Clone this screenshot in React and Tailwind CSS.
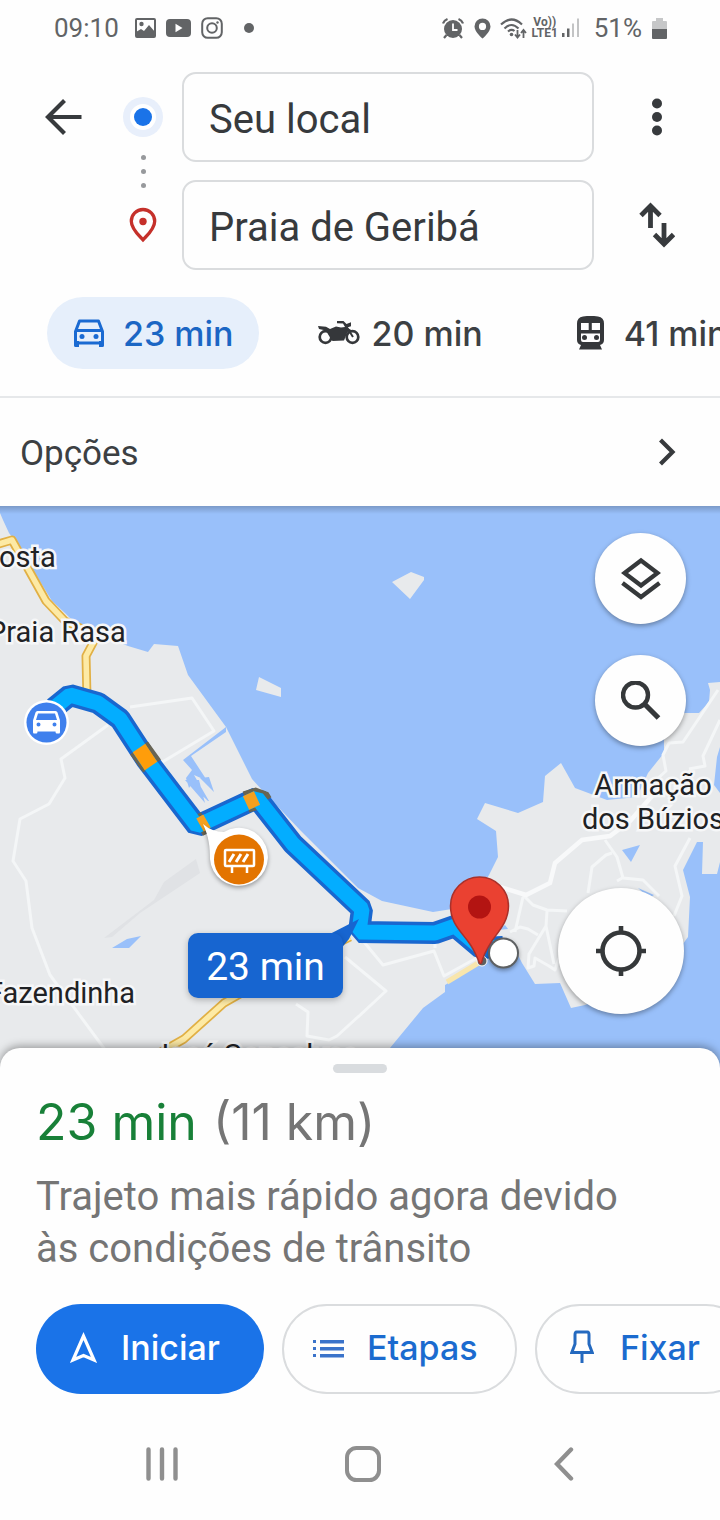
import React from "react";

function StatusBar() {
  return (
    <div className="flex h-14 items-center justify-between pl-[54px] pr-[53px] text-[26px] leading-8 text-[#626466]">
      <div className="flex items-center">
        <span>09:10</span>
        <svg className="ml-4 h-[20px] w-[21px]" viewBox="0 0 21 20" fill="none">
          <rect x="1" y="1" width="19" height="18" rx="1" stroke="currentColor" strokeWidth="2" />
          <path d="M1 14l5-3 3 2 5-6 6 7v5H1z" fill="currentColor" />
          <circle cx="6.500" cy="6" r="2.200" fill="currentColor" />
        </svg>
        <svg className="ml-[10px] h-[18px] w-[25px]" viewBox="0 0 25 18">
          <rect width="25" height="18" rx="4" fill="currentColor" />
          <path d="M9.500 4.800v8.400l7-4.200z" fill="#fefefe" />
        </svg>
        <svg className="ml-[10px] h-[22px] w-[22px]" viewBox="0 0 22 22" fill="none" stroke="currentColor" strokeWidth="2">
          <rect x="1.200" y="1.200" width="19.600" height="19.600" rx="5.500" />
          <circle cx="11" cy="11" r="4.800" />
          <circle cx="16.500" cy="5.500" r="1.200" fill="currentColor" stroke="none" />
        </svg>
        <span className="ml-[21px] size-[10px] rounded-full bg-current" />
      </div>
      <div className="flex items-center">
        <svg className="h-[21px] w-[22px]" viewBox="0 0 22 21" fill="none" stroke="currentColor">
          <circle cx="11" cy="11" r="9" fill="currentColor" stroke="none" />
          <path d="M1 5.500Q2 2.500 5.500 1M21 5.500Q20 2.500 16.500 1M4.500 17l-2.500 3M17.500 17l2.500 3" strokeWidth="2.200" />
          <path d="M11 5.500V12h4.500" stroke="#fefefe" strokeWidth="1.800" />
        </svg>
        <svg className="ml-[10px] h-[21px] w-[17px]" viewBox="0 0 17 21">
          <path fillRule="evenodd" fill="currentColor" d="M8.500 0.500A8 8 0 0 0 .5 8.500C.5 14 8.500 20.500 8.500 20.500S16.500 14 16.500 8.500A8 8 0 0 0 8.500.5zM8.500 4.800a3.600 3.600 0 1 1 0 7.200 3.600 3.600 0 0 1 0-7.200z" />
        </svg>
        <svg className="ml-[9px] h-[21px] w-[27px]" viewBox="0 0 27 21" fill="none" stroke="currentColor" strokeWidth="2.200">
          <path d="M1 6.500Q11.500-3.500 22 6.500M4.500 10.500Q11.500 3.500 18.500 10.500M8 13.500Q11.500 10.500 14.500 13" />
          <circle cx="11.500" cy="16.500" r="1.800" fill="currentColor" stroke="none" />
          <path d="M17.500 12v7M15 16.500l2.500 3 2.500-3M23.500 20v-7M21 15l2.500-3 2.500 3" strokeWidth="1.800" />
        </svg>
        <span className="ml-1 flex w-[28px] flex-col items-center text-[12px] font-bold leading-[11px]">
          <span>Vo))</span>
          <span>LTE1</span>
        </span>
        <svg className="ml-[3px] h-[20px] w-[18px]" viewBox="0 0 18 20">
          <path d="M0 15h2.500v4H0zM5 10.500h2.500V19H5z" fill="currentColor" />
          <path d="M10 5.500h2V19h-2zM15 .5h2V19h-2z" fill="#c3c4c5" />
        </svg>
        <span className="ml-[14px]">51%</span>
        <svg className="ml-[10px] h-[21px] w-[15px]" viewBox="0 0 15 21">
          <path d="M4 0h7v3h3a1 1 0 0 1 1 1v8H0V4a1 1 0 0 1 1-1h3z" fill="#c6c7c8" />
          <path d="M0 11h15v9a1 1 0 0 1-1 1H1a1 1 0 0 1-1-1z" fill="currentColor" />
        </svg>
      </div>
    </div>
  );
}

const fieldClass =
  "h-[90px] w-full min-w-0 rounded-[14px] border-2 border-[#dadcde] bg-transparent px-[25px] pt-1 text-[40px] text-[#373a3d] outline-none";

function RouteForm() {
  return (
    <form className="grid grid-cols-[104px_78px_1fr_126px] grid-rows-[90px_90px] gap-y-[18px] pt-4">
      <button type="button" aria-label="Voltar" className="flex items-center pl-[44px]">
        <svg className="size-[38px]" viewBox="0 0 38 38" fill="none" stroke="#373a3d" strokeWidth="4.200">
          <path d="M20.500 2.500L4 19l16.500 16.500M3.500 19H37.500" />
        </svg>
      </button>
      <div className="row-span-2 flex flex-col items-center pt-[25px]">
        <span className="flex size-10 items-center justify-center rounded-full bg-[#e8effb]">
          <span className="flex size-[26px] items-center justify-center rounded-full bg-white">
            <span className="size-[18px] rounded-full bg-[#1a73e8]" />
          </span>
        </span>
        <span className="mt-[18px] flex flex-col gap-[9px]">
          <span className="size-[5px] rounded-full bg-[#97999c]" />
          <span className="size-[5px] rounded-full bg-[#97999c]" />
          <span className="size-[5px] rounded-full bg-[#97999c]" />
        </span>
        <svg className="mt-[19px] h-9 w-7" viewBox="0 0 28 36">
          <path d="M14 2.500A11.700 11.700 0 0 0 2.300 14.200c0 8 8 14.500 11.700 18.600 3.700-4.100 11.700-10.600 11.700-18.600A11.700 11.700 0 0 0 14 2.500z" fill="none" stroke="#c5302a" strokeWidth="3.300" />
          <circle cx="14" cy="14.500" r="3.700" fill="#c5302a" />
        </svg>
      </div>
      <input aria-label="Origem" defaultValue="Seu local" className={fieldClass} />
      <button type="button" aria-label="Mais opções" className="flex items-center justify-center">
        <svg className="h-10 w-3" viewBox="0 0 12 40" fill="#373a3d">
          <circle cx="6" cy="6.500" r="5" />
          <circle cx="6" cy="20" r="5" />
          <circle cx="6" cy="33.500" r="5" />
        </svg>
      </button>
      <span />
      <input aria-label="Destino" defaultValue="Praia de Geribá" className={fieldClass} />
      <button type="button" aria-label="Inverter origem e destino" className="flex items-center justify-center">
        <svg className="h-[46px] w-9" viewBox="0 0 36 46" fill="none" stroke="#373a3d" strokeWidth="4.800">
          <path d="M11.500 26V4M2 13.500L11.500 4l9.500 9.500M25 21v21M15.500 32.500L25 42l9.500-9.500" />
        </svg>
      </button>
    </form>
  );
}

function TravelModes() {
  return (
    <nav className="mt-[27px] flex overflow-hidden whitespace-nowrap border-b-2 border-[#e6e8ea] pb-[27px] pl-[47px] font-[Inter,sans-serif] text-[34px] font-medium text-[#3c4043]">
      <button type="button" className="flex h-[72px] shrink-0 items-center rounded-full bg-[#e6effb] pl-[26px] pr-[25px] text-[#1b66c4]">
        <svg className="mr-[18px] h-[29px] w-8" viewBox="0 0 32 29" fill="none" stroke="#1a6ad2">
          <path d="M2.500 12.500L6.500 2h19l4 10.500v11.500h-27z" strokeWidth="3" strokeLinejoin="round" />
          <path d="M2.500 11.500h27" strokeWidth="3" />
          <path d="M1 22h5v6H2.500Q1 28 1 26.500zM26 22h5v4.500q0 1.500-1.500 1.500H26z" fill="#1a6ad2" stroke="none" />
          <circle cx="9" cy="17.500" r="2.500" fill="#1a6ad2" stroke="none" />
          <circle cx="23" cy="17.500" r="2.500" fill="#1a6ad2" stroke="none" />
        </svg>
        23 min
      </button>
      <button type="button" className="ml-[59px] flex h-[72px] shrink-0 items-center">
        <svg className="mr-3 h-6 w-[42px]" viewBox="0 0 42 24" fill="none" stroke="#35373a">
          <circle cx="7.500" cy="16" r="5.800" strokeWidth="2.700" />
          <circle cx="34.500" cy="16" r="5.800" strokeWidth="2.700" />
          <path d="M0 5l8 .8 4 2.200 6-2.500 5 1 4-.5-2-3.500-6-.3V0h6.500l3 3L33 1.200v4l-4 1.300 5 3-4.500 1.600-3.500 8.500-11.500.4L10.500 14 8 9.500 1 8z" fill="#35373a" stroke="none" />
          <path d="M28 5l7 11" strokeWidth="2" />
        </svg>
        20 min
      </button>
      <button type="button" className="ml-[93px] flex h-[72px] shrink-0 items-center">
        <svg className="mr-[19px] h-[34px] w-[29px]" viewBox="0 0 29 34">
          <path d="M7 .5Q14.500-.8 22 .5 28 1.500 28 7.500V24q0 4-4 5l2 4.500H3L5 29q-4-1-4-5V7.500Q1 1.500 7 .5z" fill="#35373a" />
          <path d="M5 7h7.700V14H5zM15.800 7H24v7h-8.200zM5 17.500h19v6.500q0 2-2 2H7q-2 0-2-2z" fill="#fefefe" />
          <circle cx="8.500" cy="21.500" r="2.500" fill="#35373a" />
          <circle cx="20.500" cy="21.500" r="2.500" fill="#35373a" />
        </svg>
        41 min
      </button>
    </nav>
  );
}

const labelClass =
  "absolute whitespace-nowrap text-center text-[29px] leading-[34px] text-[#1f2225] [paint-order:stroke] [-webkit-text-stroke:5px_#f6f7f8]";
const fabClass = "flex items-center justify-center rounded-full bg-[#fefefe] shadow-[0_2px_5px_rgba(0,0,0,0.35)]";

function MapDrawing() {
  return (
    <svg className="absolute inset-0 h-full w-full" viewBox="0 506 720 562" preserveAspectRatio="xMidYMid slice">
      <rect y="506" width="720" height="562" fill="#99c0fa" />
      <g fill="#e8eaec">
        <path d="M0 513L3 520 9 533 15 541 52 601 65 613 76 624 100 635 128 646 148 652 154 644 178 646 188 675 226 727 252 779 262 790 300 830 358 888 382 901 433 912 452 909 470 905 489 875 498 857 496 831 477 819 485 803 518 813 543 802 545 776 561 763 575 788 607 800 637 797 648 773 664 753 664 737 675 713 699 713 709 702 710 690 708 683 720 682 720 747 717 757 714 785 720 793 720 862 717 874 702 874 703 842 697 842 683 870 690 897 688 937 660 975 585 1005 571 1008 560 983 535 984 522 963 513 945 482 963 445 985 445 992 423 1008 390 1048 372 1068 0 1068z" />
        <path d="M392 582l19-10 13 5v3l-14 19zM259 677l22 11v9l-25-7z" />
      </g>
      <g fill="#99c0fa">
        <path d="M226 727v5l-35 24 17 26-5-3-9-4 15 26-1 0-17-16-2 3-3-10 6-8-9-10zM185 780h14l6 23zM200 778l9-1 5 15zM112 948l15-9 14-3-12 12zM622 850l18-5-9 17zM498 930l7-5 3 4zM638 888l16 7-5 3z" />
      </g>
      <path d="M104 938l50-38 10-18 32-23 4 14-60 40-28 24z" fill="#e0e2e5" />
      <g fill="none" stroke="#f4f6f7" strokeWidth="3" strokeLinejoin="round">
        <path d="M130 707l62-9 22 33-55 33M108 725l-47 34 4 19-16 26-29 15-7 42 13 20 6 47 18 47 56 76" />
        <path d="M364 942l19 23 51-14 10 25 40-22M435 948v-10M345 957l41 34-28 26M296 1004l12 8-1 24 22 4 8-4 22-20" />
        <path d="M523 895l10 10 14 5 20 1M523 897l-8 35M547 911l-1 15-17 28-1 14 6-2 1-8 14 8 6 4 4-12M546 926l8 38M510 932l10-5 8 2 10 6" />
        <path d="M588 893l4-26 14-12 6-2M605 840l12 17 6 21 20 2 8 8 8 8M617 881l7-4" />
        <path d="M690 838l-15 28 7 30-8 20M718 690l-35 52-14 1-6 12 3 16-20 18M720 720l-17 36 2 10-16 3" />
      </g>
      <path d="M500 887l26 8 24-12 5-20 27-23 28-4 20-15 30-34" fill="none" stroke="#f8f9fa" strokeWidth="4.500" />
      <g fill="none" strokeLinejoin="round">
        <g stroke="#e1b045" strokeWidth="9">
          <path d="M-5 545l17-5 34 61 19 20 22 10 7 10-8 15 1 42" />
          <path d="M154 1056l30-17 40-36 60-34 66-32" />
        </g>
        <g stroke="#fdeaa5" strokeWidth="5.500">
          <path d="M-5 545l17-5 34 61 19 20 22 10 7 10-8 15 1 42" />
          <path d="M154 1056l30-17 40-36 60-34 66-32" />
        </g>
        <path d="M447 982l33-20" stroke="#f8e6ad" strokeWidth="5" />
      </g>
      <g fill="none" strokeLinejoin="bevel">
        <path d="M54 708l16-13 28 8 22 16 26 40 51 67 60-28 36 46 69 65-3 23 76 1 20-7 26 22 22-1" stroke="#1967cf" strokeWidth="22" />
        <path d="M139 748l13 18M198 826l8-4M246 802l13-4 3 5" stroke="#686453" strokeWidth="22" />
        <path d="M54 708l16-13 28 8 22 16 26 40 51 67 60-28 36 46 69 65-3 23 76 1 20-7 26 22 22-1" stroke="#03adff" strokeWidth="15" />
        <path d="M480 949h20" stroke="#1672d8" strokeWidth="15" />
        <path d="M139 748l12 18" stroke="#ff9d0a" strokeWidth="15" />
        <path d="M200 825l7-4M246 803l11-5" stroke="#f4a020" strokeWidth="15" />
      </g>
      <circle cx="46.500" cy="722.500" r="22.500" fill="#fff" />
      <circle cx="46.500" cy="722.500" r="20" fill="#3f80ed" />
      <path fillRule="evenodd" fill="#fff" d="M37.500 711h18q1.500 0 2 1.500l2.500 8V732q0 1.500-1 1.500h-2.500q-1 0-1-2h-18q0 2-1 2H34q-1 0-1-1.500v-11.500l2.500-8q.5-1.500 2-1.500zm.5 2.500l-2 6.500h21l-2-6.500zM38.500 722.500a2 2 0 1 0 0 4 2 2 0 0 0 0-4zm16 0a2 2 0 1 0 0 4 2 2 0 0 0 0-4z" />
      <g style={{ filter: "drop-shadow(0 2px 2px rgba(0,0,0,.35))" }}>
        <path d="M203 824q9 8 21 8a29 29 0 1 1-14 27c0-12-1-22-7-35z" fill="#fff" />
        <circle cx="239" cy="859.500" r="25" fill="#e37400" />
        <circle cx="503.500" cy="953" r="15.500" fill="#5d6062" />
      </g>
      <g fill="none" stroke="#fff" strokeWidth="2.500">
        <rect x="225" y="850" width="29" height="16" rx="1" />
        <path d="M232 866v7M247 866v7" />
        <path d="M229 862l5-8M236 862l5-8M243 862l5-8" strokeWidth="3" />
      </g>
      <circle cx="503.500" cy="953" r="13.500" fill="#fff" />
      <circle cx="482" cy="961" r="5" fill="#5d6062" stroke="#fff" />
      <path d="M479.500 877a29 29 0 0 0-29 29c0 16 9 24 18 36 6 8 8 14 11 21q1 1 2 0c2-9 6-15 11-23 8-11 16-20 16-34a29 29 0 0 0-29-29z" fill="#ea4131" stroke="#a9312b" strokeWidth="1.500" />
      <circle cx="479.500" cy="907" r="11.500" fill="#b31412" />
      <path d="M326 936l33-17-10 20-10 12z" fill="#1765d0" />
    </svg>
  );
}

function RouteMap() {
  return (
    <main className="relative min-h-[562px] flex-1 overflow-hidden bg-[#99c0fa]">
      <MapDrawing />
      <span className={`${labelClass} -left-px top-[34px]`}>osta</span>
      <span className={`${labelClass} left-[-12px] top-[109px]`}>Praia Rasa</span>
      <span className={`${labelClass} left-[-13px] top-[470px]`}>Fazendinha</span>
      <span className={`${labelClass} right-[-4px] top-[262px]`}>
        Armação
        <br />
        dos Búzios
      </span>
      <span className={`${labelClass} left-[153px] top-[532px]`}>José Gonçalves</span>
      <button type="button" className="absolute left-[188px] top-[427px] flex h-[65px] w-[155px] items-center justify-center rounded-[10px] bg-[#1765d0] pt-1 text-[39px] text-white shadow-[0_2px_6px_rgba(0,0,0,0.25)]">
        23 min
      </button>
      <div className="absolute right-[34px] top-[27px] flex flex-col gap-[31px]">
        <button type="button" aria-label="Camadas" className={`${fabClass} size-[91px]`}>
          <svg className="h-[44px] w-10" viewBox="0 0 40 44" fill="none" stroke="#35383a" strokeWidth="4.300">
            <path d="M20 3.500L36.500 16 20 28.500 3.500 16zM1.500 26L20 40l18.500-14" />
          </svg>
        </button>
        <button type="button" aria-label="Pesquisar" className={`${fabClass} size-[91px]`}>
          <svg className="size-10" viewBox="0 0 40 40" fill="none" stroke="#35383a">
            <circle cx="14.500" cy="14" r="12.500" strokeWidth="4.400" />
            <path d="M24 23.500l13.500 13.500" strokeWidth="5.200" />
          </svg>
        </button>
      </div>
      <button type="button" aria-label="Minha localização" className={`${fabClass} absolute right-9 top-[382px] size-[126px]`}>
        <svg className="size-[50px]" viewBox="0 0 50 50" fill="none" stroke="#35383a" strokeWidth="4.600">
          <circle cx="25" cy="25" r="18.500" />
          <path d="M25 0v8M25 42v8M0 25h8M42 25h8" />
        </svg>
      </button>
      <div className="pointer-events-none absolute inset-x-0 top-0 h-2 bg-linear-to-b from-black/20 to-transparent" />
    </main>
  );
}

const actionClass = "flex h-[90px] shrink-0 items-center rounded-full pb-1 font-[Inter,sans-serif] text-[34px] font-medium";

function RouteSheet() {
  return (
    <section className="relative -mt-5 flex flex-col rounded-t-[20px] bg-[#fefefe] pl-9 shadow-[0_-2px_8px_rgba(0,0,0,0.35)]">
      <span className="mr-9 mt-4 h-[9px] w-[54px] self-center rounded-full bg-[#d9dcdf]" />
      <h1 className="mt-5 flex h-[58px] items-center gap-4 font-[Inter,sans-serif] text-[50px] leading-[58px] text-[#757575]">
        <span className="text-[#188038]">23 min</span>
        <span>(11 km)</span>
      </h1>
      <p className="mt-5 max-w-[620px] pr-2 text-[40px] leading-[52px] text-[#757575]">
        Trajeto mais rápido agora devido às condições de trânsito
      </p>
      <div className="mt-[29px] flex gap-[18px] overflow-hidden">
        <button type="button" className={`${actionClass} w-[228px] bg-[#1a73e8] pl-[34px] text-white`}>
          <svg className="mr-6 h-8 w-[27px]" viewBox="0 0 27 32" fill="none" stroke="currentColor" strokeWidth="3.200">
            <path d="M13.500 5L3 29l10.500-4.500L24 29z" />
          </svg>
          Iniciar
        </button>
        <button type="button" className={`${actionClass} w-[235px] border-2 border-[#dadcde] pl-[29px] text-[#1b6bcf]`}>
          <svg className="mr-[23px] h-[22px] w-[31px]" viewBox="0 -4 31 22" fill="#3a73ca">
            <path d="M0 0h3v3H0zM7 0h24v3.500H7zM0 7h3v3H0zM7 7h24v3.500H7zM0 14h3v3H0zM7 14h24v3.500H7z" />
          </svg>
          Etapas
        </button>
        <button type="button" className={`${actionClass} w-[216px] border-2 border-[#dadcde] pl-[33px] text-[#1b6bcf]`}>
          <svg className="mr-[26px] h-[34px] w-6" viewBox="0 0 24 34" fill="none" stroke="#2469bf" strokeWidth="3">
            <path d="M6.500 2h11q1.500 0 1.500 3v9l3.200 8.500H1.800L5 14V5q0-3 1.500-3zM12 22.500V33" />
          </svg>
          Fixar
        </button>
      </div>
    </section>
  );
}

function SystemNav() {
  return (
    <nav className="relative flex h-[126px] items-center bg-[#fefefe] pl-[62px] pr-14 pt-[14px]">
      <button type="button" aria-label="Recentes" className="flex flex-1 justify-center">
        <svg className="h-[34px] w-8" viewBox="0 0 32 34" stroke="#8f8f8f" strokeWidth="4.400" strokeLinecap="round">
          <path d="M2.500 2.500v29M16 2.500v29M29.500 2.500v29" />
        </svg>
      </button>
      <button type="button" aria-label="Início" className="flex flex-1 justify-center">
        <svg className="size-9" viewBox="0 0 36 36" fill="none" stroke="#8f8f8f" strokeWidth="4">
          <rect x="2" y="2" width="32" height="32" rx="9.500" />
        </svg>
      </button>
      <button type="button" aria-label="Voltar" className="flex flex-1 justify-center">
        <svg className="h-[34px] w-5" viewBox="0 0 20 34" fill="none" stroke="#8f8f8f" strokeWidth="4.400" strokeLinecap="round">
          <path d="M17 2.500L3 17l14 14.500" />
        </svg>
      </button>
    </nav>
  );
}

export default function App() {
  return (
    <div className="flex min-h-screen flex-col overflow-x-hidden bg-[#fefefe] font-[Roboto,sans-serif]">
      <header>
        <StatusBar />
        <RouteForm />
        <TravelModes />
        <button type="button" className="flex h-[108px] w-full items-center justify-between pl-5 pr-11 text-[35px] text-[#3c4043]">
          <span className="pt-1">Opções</span>
          <svg className="h-[28px] w-[18px]" viewBox="0 0 18 28" fill="none" stroke="#373a3d" strokeWidth="4.200">
            <path d="M2.500 2L14.500 14 2.500 26" />
          </svg>
        </button>
      </header>
      <RouteMap />
      <RouteSheet />
      <SystemNav />
    </div>
  );
}
